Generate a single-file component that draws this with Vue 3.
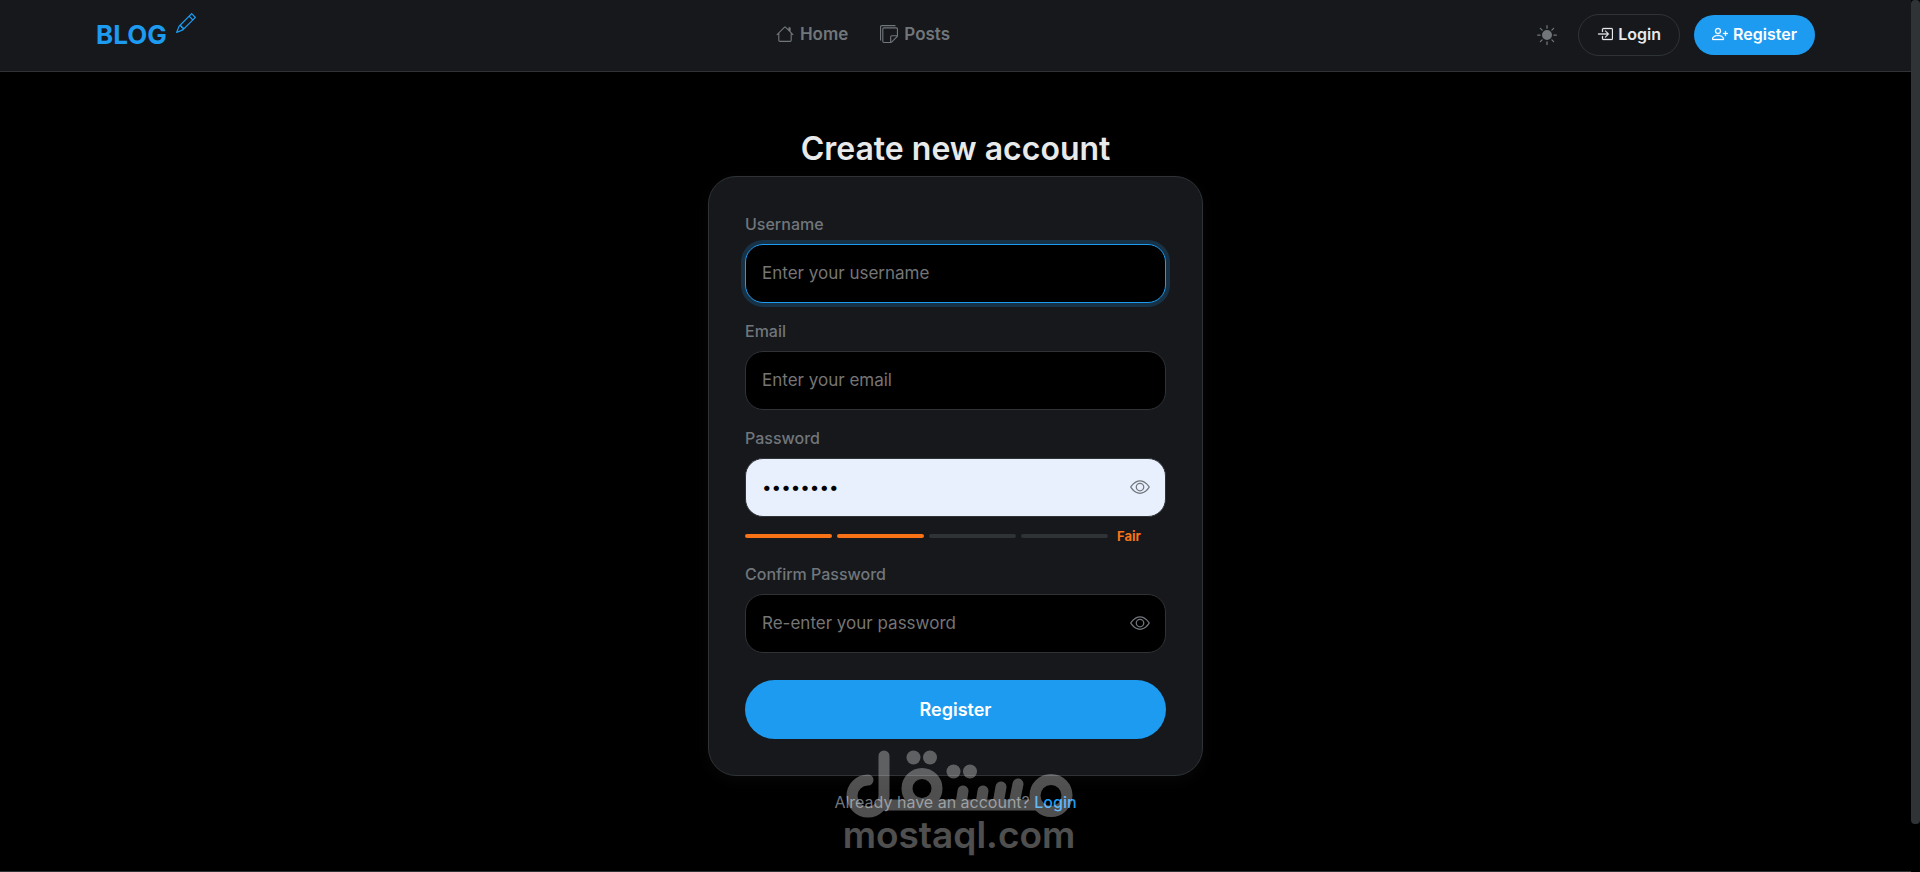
<template>
  <div class="page">
    <header class="navbar">
      <a href="#" class="brand">
        <span>BLOG</span>
        <svg class="brand-icon" viewBox="0 0 16 16" fill="currentColor" aria-hidden="true">
          <path :d="icons.pencil"></path>
        </svg>
      </a>

      <nav class="nav-links">
        <a v-for="link in links" :key="link.label" href="#" class="nav-link">
          <svg viewBox="0 0 16 16" fill="currentColor" aria-hidden="true">
            <path :d="icons[link.icon]"></path>
          </svg>
          <span>{{ link.label }}</span>
        </a>
      </nav>

      <div class="nav-actions">
        <button type="button" class="theme-btn" aria-label="Toggle theme">
          <svg viewBox="0 0 16 16" fill="currentColor" aria-hidden="true">
            <path :d="icons.sun"></path>
          </svg>
        </button>
        <a href="#" class="pill pill-outline">
          <svg viewBox="0 0 16 16" fill="currentColor" aria-hidden="true">
            <path :d="icons.login"></path>
          </svg>
          <span>Login</span>
        </a>
        <a href="#" class="pill pill-primary">
          <svg viewBox="0 0 16 16" fill="currentColor" aria-hidden="true">
            <path :d="icons.personPlus"></path>
          </svg>
          <span>Register</span>
        </a>
      </div>
    </header>

    <main class="content">
      <h1 class="title">Create new account</h1>

      <form class="card" @submit.prevent>
        <div v-for="field in fields" :key="field.id" class="field">
          <label :for="field.id">{{ field.label }}</label>
          <div class="input-wrap">
            <input
              :id="field.id"
              v-model="form[field.id]"
              :type="field.secret && !visible[field.id] ? 'password' : 'text'"
              :placeholder="field.placeholder"
              :class="{ active: activeField === field.id, filled: field.secret && form[field.id] }"
              autocomplete="off"
              @focus="activeField = field.id"
            />
            <button
              v-if="field.secret"
              type="button"
              class="eye-btn"
              aria-label="Show password"
              @click="visible[field.id] = !visible[field.id]"
            >
              <svg viewBox="0 0 16 16" fill="currentColor" aria-hidden="true">
                <path :d="icons.eye"></path>
              </svg>
            </button>
          </div>
          <div v-if="field.id === 'password' && form.password" class="strength">
            <div class="bars">
              <span v-for="n in 4" :key="n" class="bar" :class="{ on: n <= strength }"></span>
            </div>
            <span class="strength-label">{{ strengthLabel }}</span>
          </div>
        </div>

        <button type="submit" class="submit-btn">Register</button>
      </form>

      <p class="switch">Already have an account? <a href="#">Login</a></p>
    </main>

    <footer class="footer"></footer>

    <div class="watermark">
      <svg viewBox="0 0 228 70" fill="none" stroke="currentColor" stroke-width="11" stroke-linecap="round" role="img" aria-label="مستقل">
        <path d="M23 31A16 16 0 1 0 39 47V7"></path>
        <path d="M39 56H196" stroke-linecap="butt"></path>
        <circle cx="77" cy="39.5" r="15"></circle>
        <path d="M118 42L116 55M138 42L136 55M156 38L153 55M173 35L169 55"></path>
        <circle cx="206" cy="46.5" r="16"></circle>
        <g fill="currentColor" stroke="none">
          <circle cx="68.5" cy="8.5" r="7"></circle>
          <circle cx="85" cy="8.5" r="7"></circle>
          <circle cx="108.5" cy="22.5" r="7"></circle>
          <circle cx="125" cy="22.5" r="7"></circle>
        </g>
      </svg>
      <span>mostaql.com</span>
    </div>

    <div class="scroll-track"><div class="scroll-thumb"></div></div>
  </div>
</template>

<script setup>
import { computed, reactive, ref } from 'vue'

const icons = {
  pencil: 'M12.146.146a.5.5 0 0 1 .708 0l3 3a.5.5 0 0 1 0 .708l-10 10a.5.5 0 0 1-.168.11l-5 2a.5.5 0 0 1-.65-.65l2-5a.5.5 0 0 1 .11-.168zM11.207 2.5 13.5 4.793 14.793 3.5 12.5 1.207zm1.586 3L10.5 3.207 4 9.707V10h.5a.5.5 0 0 1 .5.5v.5h.5a.5.5 0 0 1 .5.5v.5h.293zm-9.761 5.175-.106.106-1.528 3.821 3.821-1.528.106-.106A.5.5 0 0 1 5 12.5V12h-.5a.5.5 0 0 1-.5-.5V11h-.5a.5.5 0 0 1-.468-.325',
  house: 'M8.707 1.5a1 1 0 0 0-1.414 0L.646 8.146a.5.5 0 0 0 .708.708L2 8.207V13.5A1.5 1.5 0 0 0 3.5 15h9a1.5 1.5 0 0 0 1.5-1.5V8.207l.646.647a.5.5 0 0 0 .708-.708L13 5.793V2.5a.5.5 0 0 0-.5-.5h-1a.5.5 0 0 0-.5.5v1.293zM13 7.207V13.5a.5.5 0 0 1-.5.5h-9a.5.5 0 0 1-.5-.5V7.207l5-5z',
  stickies: 'M1.5 0A1.5 1.5 0 0 0 0 1.5V13a1 1 0 0 0 1 1V1.5a.5.5 0 0 1 .5-.5H14a1 1 0 0 0-1-1zM3.5 2A1.5 1.5 0 0 0 2 3.5v11A1.5 1.5 0 0 0 3.5 16h6.086a1.5 1.5 0 0 0 1.06-.44l4.915-4.914A1.5 1.5 0 0 0 16 9.586V3.5A1.5 1.5 0 0 0 14.5 2zM3 3.5a.5.5 0 0 1 .5-.5h11a.5.5 0 0 1 .5.5V9h-4.5A1.5 1.5 0 0 0 9 10.5V15H3.5a.5.5 0 0 1-.5-.5zm7 11.293V10.5a.5.5 0 0 1 .5-.5h4.293z',
  sun: 'M8 12a4 4 0 1 0 0-8 4 4 0 0 0 0 8M8 0a.5.5 0 0 1 .5.5v2a.5.5 0 0 1-1 0v-2A.5.5 0 0 1 8 0m0 13a.5.5 0 0 1 .5.5v2a.5.5 0 0 1-1 0v-2A.5.5 0 0 1 8 13m8-5a.5.5 0 0 1-.5.5h-2a.5.5 0 0 1 0-1h2a.5.5 0 0 1 .5.5M3 8a.5.5 0 0 1-.5.5h-2a.5.5 0 0 1 0-1h2A.5.5 0 0 1 3 8m10.657-5.657a.5.5 0 0 1 0 .707l-1.414 1.415a.5.5 0 1 1-.707-.708l1.414-1.414a.5.5 0 0 1 .707 0m-9.193 9.193a.5.5 0 0 1 0 .707L3.05 13.657a.5.5 0 0 1-.707-.707l1.414-1.414a.5.5 0 0 1 .707 0m9.193 2.121a.5.5 0 0 1-.707 0l-1.414-1.414a.5.5 0 0 1 .707-.707l1.414 1.414a.5.5 0 0 1 0 .707M4.464 4.465a.5.5 0 0 1-.707 0L2.343 3.05a.5.5 0 1 1 .707-.707l1.414 1.414a.5.5 0 0 1 0 .708',
  login: 'M6 3.5a.5.5 0 0 1 .5-.5h8a.5.5 0 0 1 .5.5v9a.5.5 0 0 1-.5.5h-8a.5.5 0 0 1-.5-.5v-2a.5.5 0 0 0-1 0v2A1.5 1.5 0 0 0 6.5 14h8a1.5 1.5 0 0 0 1.5-1.5v-9A1.5 1.5 0 0 0 14.5 2h-8A1.5 1.5 0 0 0 5 3.5v2a.5.5 0 0 0 1 0zM11.854 8.354a.5.5 0 0 0 0-.708l-3-3a.5.5 0 1 0-.708.708L10.293 7.5H1.5a.5.5 0 0 0 0 1h8.793l-2.147 2.146a.5.5 0 0 0 .708.708z',
  personPlus: 'M6 8a3 3 0 1 0 0-6 3 3 0 0 0 0 6m2-3a2 2 0 1 1-4 0 2 2 0 0 1 4 0m4 8c0 1-1 1-1 1H1s-1 0-1-1 1-4 6-4 6 3 6 4m-1-.004c-.001-.246-.154-.986-.832-1.664C9.516 10.68 8.289 10 6 10s-3.516.68-4.168 1.332c-.678.678-.83 1.418-.832 1.664zM13.5 5a.5.5 0 0 1 .5.5V7h1.5a.5.5 0 0 1 0 1H14v1.5a.5.5 0 0 1-1 0V8h-1.5a.5.5 0 0 1 0-1H13V5.5a.5.5 0 0 1 .5-.5',
  eye: 'M16 8s-3-5.5-8-5.5S0 8 0 8s3 5.5 8 5.5S16 8 16 8M1.173 8a13 13 0 0 1 1.66-2.043C4.12 4.668 5.88 3.5 8 3.5s3.879 1.168 5.168 2.457A13 13 0 0 1 14.828 8q-.086.13-.195.288c-.335.48-.83 1.12-1.465 1.755C11.879 11.332 10.119 12.5 8 12.5s-3.879-1.168-5.168-2.457A13 13 0 0 1 1.172 8zM8 5.5a2.5 2.5 0 1 0 0 5 2.5 2.5 0 0 0 0-5M4.5 8a3.5 3.5 0 1 1 7 0 3.5 3.5 0 0 1-7 0'
}

const links = [
  { label: 'Home', icon: 'house' },
  { label: 'Posts', icon: 'stickies' }
]

const fields = [
  { id: 'username', label: 'Username', placeholder: 'Enter your username' },
  { id: 'email', label: 'Email', placeholder: 'Enter your email' },
  { id: 'password', label: 'Password', placeholder: 'Enter your password', secret: true },
  { id: 'confirm', label: 'Confirm Password', placeholder: 'Re-enter your password', secret: true }
]

const form = reactive({ username: '', email: '', password: 'blog2024', confirm: '' })
const visible = reactive({ password: false, confirm: false })
const activeField = ref('username')

const strength = computed(() => {
  const value = form.password
  const checks = [value.length >= 8, /\d/.test(value), /[A-Z]/.test(value), /[^A-Za-z0-9]/.test(value)]
  return checks.filter(Boolean).length
})

const strengthLabel = computed(() => ['Weak', 'Weak', 'Fair', 'Good', 'Strong'][strength.value])
</script>

<style>
html,
body {
  background: #000;
}
</style>

<style scoped>
.page {
  box-sizing: border-box;
  min-height: 100vh;
  padding-right: 9px;
  display: flex;
  flex-direction: column;
  position: relative;
  background: #000;
  color: #e7e9ea;
  font-family: Inter, "Liberation Sans", sans-serif;
  font-size: 16px;
}

a {
  text-decoration: none;
  color: inherit;
}

button,
input {
  font-family: inherit;
}

svg {
  display: block;
  flex-shrink: 0;
}

.navbar {
  box-sizing: border-box;
  height: 72px;
  padding: 0 96px 2px;
  display: flex;
  align-items: center;
  justify-content: space-between;
  background: #16181c;
  border-bottom: 1px solid #2f3336;
}

.brand {
  display: flex;
  align-items: flex-start;
  gap: 9px;
  color: #1d9bf0;
  font-size: 26px;
  line-height: 44px;
  font-weight: 700;
}

.brand-icon {
  width: 20px;
  height: 20px;
}

.nav-links {
  display: flex;
  gap: 32px;
}

.nav-link {
  display: flex;
  align-items: center;
  gap: 6px;
  padding-bottom: 2px;
  color: #71767b;
  font-size: 17px;
  font-weight: 600;
}

.nav-link svg {
  width: 18px;
  height: 18px;
}

.nav-actions {
  display: flex;
  align-items: center;
  gap: 14px;
}

.theme-btn {
  padding: 7px;
  border: none;
  background: transparent;
  color: #71767b;
  cursor: pointer;
}

.theme-btn svg {
  width: 20px;
  height: 20px;
}

.pill {
  display: flex;
  align-items: center;
  gap: 5px;
  padding: 0 18px 2px;
  border-radius: 999px;
  line-height: 38px;
  font-weight: 600;
}

.pill svg {
  width: 16px;
  height: 16px;
  stroke: currentColor;
  stroke-width: 0.3;
}

.pill-outline {
  border: 1px solid #2f3336;
}

.pill-primary {
  background: #1d9bf0;
  color: #fff;
}

.content {
  flex: 1;
  display: flex;
  flex-direction: column;
  align-items: center;
  padding: 57px 16px 0;
}

.title {
  margin: 0 0 7px;
  font-size: 32px;
  line-height: 40px;
  font-weight: 600;
}

.card {
  box-sizing: border-box;
  width: 100%;
  max-width: 495px;
  padding: 36px;
  background: #16181c;
  border: 1px solid #2f3336;
  border-radius: 28px;
  box-shadow: 0 4px 16px rgba(255, 255, 255, 0.03);
}

.field {
  margin-bottom: 17px;
}

.field label {
  display: block;
  margin-bottom: 8px;
  color: #71767b;
  font-size: 16px;
  line-height: 23px;
  font-weight: 500;
}

.input-wrap {
  position: relative;
}

.input-wrap input {
  box-sizing: border-box;
  display: block;
  width: 100%;
  height: 59px;
  padding: 0 16px 2px;
  border: 1px solid #2f3336;
  border-radius: 18px;
  outline: none;
  background: #000;
  color: #e7e9ea;
  font-size: 17px;
}

.input-wrap input::placeholder {
  color: #757575;
}

.input-wrap input.active {
  border-color: #1d9bf0;
  box-shadow: 0 0 0 4px rgba(29, 155, 240, 0.2);
}

.input-wrap input.filled {
  background: #e8f0fe;
  color: #000;
}

.eye-btn {
  position: absolute;
  top: 0;
  bottom: 0;
  right: 16px;
  padding: 0 0 2px;
  border: none;
  background: transparent;
  color: #71767b;
  cursor: pointer;
}

.eye-btn svg {
  width: 20px;
  height: 20px;
}

.strength {
  display: flex;
  align-items: center;
  gap: 9px;
  margin-top: 9px;
}

.bars {
  flex: 1;
  display: flex;
  gap: 5px;
}

.bar {
  flex: 1;
  height: 4px;
  border-radius: 2px;
  background: #2f3336;
}

.bar.on {
  background: #f97316;
}

.strength-label {
  width: 49px;
  color: #f97316;
  font-size: 13px;
  line-height: 20px;
  font-weight: 700;
}

.submit-btn {
  display: block;
  width: 100%;
  height: 59px;
  margin-top: 27px;
  border: none;
  border-radius: 999px;
  background: #1d9bf0;
  color: #fff;
  font-size: 18px;
  font-weight: 600;
  cursor: pointer;
}

.switch {
  margin: 14px 0 0;
  color: #71767b;
  font-size: 16px;
  line-height: 24px;
}

.switch a {
  color: #1d9bf0;
  font-weight: 500;
}

.footer {
  border-top: 1px solid #2f3336;
}

.watermark {
  position: absolute;
  left: 0;
  right: 2px;
  bottom: 21px;
  display: flex;
  flex-direction: column;
  align-items: center;
  color: #fff;
  opacity: 0.31;
  pointer-events: none;
}

.watermark svg {
  width: 228px;
  height: 70px;
}

.watermark span {
  font-size: 37px;
  line-height: 32px;
  font-weight: 600;
}

.scroll-track {
  position: fixed;
  top: 0;
  right: 0;
  bottom: 0;
  width: 9px;
  background: #000;
}

.scroll-thumb {
  height: 94.5%;
  border-radius: 4px;
  background: #2f3336;
}
</style>
